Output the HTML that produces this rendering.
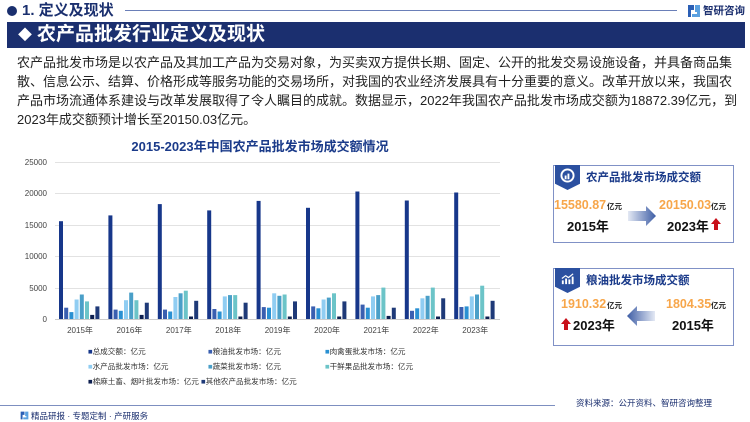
<!DOCTYPE html>
<html><head><meta charset="utf-8"><style>
*{margin:0;padding:0;box-sizing:border-box}
body{width:750px;height:422px;background:#fff;font-family:"Liberation Sans","Noto Sans CJK SC",sans-serif;position:relative;overflow:hidden;color:#222}
.abs{position:absolute}
.hdr{left:22px;top:2px;font-size:15px;font-weight:bold;color:#1a2f6e;line-height:18px}
.dot{left:7px;top:6px;width:10px;height:10px;border-radius:50%;background:#1a2f6e}
.hline{left:125px;top:10px;width:552px;height:1px;background:#6a7fb8}
.bar{left:7px;top:22px;width:738px;height:26px;background:#1b2f6f;color:#fff;font-size:19px;font-weight:bold;line-height:26px;padding-left:30px}
.para{left:17px;top:53px;width:726px;font-size:13px;line-height:19px;color:#222}
.ct{left:0;top:136px;width:520px;text-align:center;font-size:13px;font-weight:bold;color:#1b3b8a}
.panel{border:1.5px solid #8091c6;width:181px;height:78px;left:553px;background:#fff}
.badge{left:555px;width:25px;height:25px;background:#2b50a0;clip-path:polygon(0 0,100% 0,100% 75%,50% 100%,0 75%)}
.pt{font-size:11.5px;font-weight:bold;color:#1b3b8a}
.num{font-size:12.5px;font-weight:bold;color:#f7a64a}
.unit{font-size:7.5px;font-weight:bold;color:#222}
.yr{font-size:13px;font-weight:bold;color:#111}
.leg{font-size:7.6px;color:#333}
</style></head><body>
<div class="abs dot"></div>
<div class="abs hdr">1. 定义及现状</div>
<div class="abs hline"></div>
<svg class="abs" style="left:687px;top:4px" width="14" height="14" viewBox="0 0 14 14"><path d="M1 1h6v5H4v7H1z" fill="#2b5fb5"/><path d="M8 1h5v12H5v-3h5V8H8z" fill="#5aa0e0"/></svg>
<div class="abs" style="left:703px;top:3px;font-size:10.5px;font-weight:bold;color:#1b2f6f">智研咨询</div>
<div class="abs bar"><span style="position:absolute;left:11px;top:0;font-size:14px">◆</span>农产品批发行业定义及现状</div>
<div class="abs para">农产品批发市场是以农产品及其加工产品为交易对象，为买卖双方提供长期、固定、公开的批发交易设施设备，并具备商品集散、信息公示、结算、价格形成等服务功能的交易场所，对我国的农业经济发展具有十分重要的意义。改革开放以来，我国农产品市场流通体系建设与改革发展取得了令人瞩目的成就。数据显示，2022年我国农产品批发市场成交额为18872.39亿元，到2023年成交额预计增长至20150.03亿元。</div>
<div class="abs ct">2015-2023年中国农产品批发市场成交额情况</div>
<svg class="abs" style="left:0;top:0" width="540" height="340">
<g stroke="#e2e2e2" stroke-width="1">
<line x1="55" x2="500" y1="162.5" y2="162.5"/><line x1="55" x2="500" y1="193.5" y2="193.5"/><line x1="55" x2="500" y1="225.5" y2="225.5"/><line x1="55" x2="500" y1="256.5" y2="256.5"/><line x1="55" x2="500" y1="288.5" y2="288.5"/></g>
<line x1="55" x2="500" y1="319.5" y2="319.5" stroke="#ccc"/>
<g font-size="8" fill="#444" text-anchor="end">
<text x="47" y="165">25000</text><text x="47" y="196">20000</text><text x="47" y="228">15000</text><text x="47" y="259">10000</text><text x="47" y="291">5000</text><text x="47" y="322">0</text></g>
<g font-size="8" fill="#444" text-anchor="middle">
<text x="80" y="333">2015年</text><text x="129.4" y="333">2016年</text><text x="178.8" y="333">2017年</text><text x="228.2" y="333">2018年</text><text x="277.6" y="333">2019年</text><text x="327" y="333">2020年</text><text x="376.4" y="333">2021年</text><text x="425.8" y="333">2022年</text><text x="475.2" y="333">2023年</text></g>
<g transform="translate(59,319) scale(1,-1)"><rect x="0" width="4" height="97.8" fill="#17378a"/><rect x="5.2" width="4" height="11.3" fill="#3a5fb0"/><rect x="10.4" width="4" height="6.9" fill="#2a90d2"/><rect x="15.6" width="4" height="19.5" fill="#90cdf2"/><rect x="20.8" width="4" height="24.5" fill="#4a9fc8"/><rect x="26" width="4" height="17.6" fill="#6cc4c8"/><rect x="31.2" width="4" height="4.1" fill="#0d1f4f"/><rect x="36.4" width="4" height="12.6" fill="#1f3a78"/></g>
<g transform="translate(108.4,319) scale(1,-1)"><rect x="0" width="4" height="103.6" fill="#17378a"/><rect x="5.2" width="4" height="9.4" fill="#3a5fb0"/><rect x="10.4" width="4" height="8.2" fill="#2a90d2"/><rect x="15.6" width="4" height="18.8" fill="#90cdf2"/><rect x="20.8" width="4" height="26.4" fill="#4a9fc8"/><rect x="26" width="4" height="18.8" fill="#6cc4c8"/><rect x="31.2" width="4" height="4.1" fill="#0d1f4f"/><rect x="36.4" width="4" height="16.3" fill="#1f3a78"/></g>
<g transform="translate(157.8,319) scale(1,-1)"><rect x="0" width="4" height="114.9" fill="#17378a"/><rect x="5.2" width="4" height="9.4" fill="#3a5fb0"/><rect x="10.4" width="4" height="7.5" fill="#2a90d2"/><rect x="15.6" width="4" height="22" fill="#90cdf2"/><rect x="20.8" width="4" height="25.7" fill="#4a9fc8"/><rect x="26" width="4" height="28.3" fill="#6cc4c8"/><rect x="31.2" width="4" height="2.5" fill="#0d1f4f"/><rect x="36.4" width="4" height="18.2" fill="#1f3a78"/></g>
<g transform="translate(207.2,319) scale(1,-1)"><rect x="0" width="4" height="108.6" fill="#17378a"/><rect x="5.2" width="4" height="10" fill="#3a5fb0"/><rect x="10.4" width="4" height="7.5" fill="#2a90d2"/><rect x="15.6" width="4" height="22.6" fill="#90cdf2"/><rect x="20.8" width="4" height="23.9" fill="#4a9fc8"/><rect x="26" width="4" height="23.9" fill="#6cc4c8"/><rect x="31.2" width="4" height="2.5" fill="#0d1f4f"/><rect x="36.4" width="4" height="16.3" fill="#1f3a78"/></g>
<g transform="translate(256.6,319) scale(1,-1)"><rect x="0" width="4" height="118.1" fill="#17378a"/><rect x="5.2" width="4" height="11.9" fill="#3a5fb0"/><rect x="10.4" width="4" height="11.3" fill="#2a90d2"/><rect x="15.6" width="4" height="25.7" fill="#90cdf2"/><rect x="20.8" width="4" height="23.2" fill="#4a9fc8"/><rect x="26" width="4" height="24.5" fill="#6cc4c8"/><rect x="31.2" width="4" height="2.5" fill="#0d1f4f"/><rect x="36.4" width="4" height="17.6" fill="#1f3a78"/></g>
<g transform="translate(306,319) scale(1,-1)"><rect x="0" width="4" height="111.2" fill="#17378a"/><rect x="5.2" width="4" height="12.6" fill="#3a5fb0"/><rect x="10.4" width="4" height="10.7" fill="#2a90d2"/><rect x="15.6" width="4" height="19.5" fill="#90cdf2"/><rect x="20.8" width="4" height="21.4" fill="#4a9fc8"/><rect x="26" width="4" height="25.7" fill="#6cc4c8"/><rect x="31.2" width="4" height="2.5" fill="#0d1f4f"/><rect x="36.4" width="4" height="17.6" fill="#1f3a78"/></g>
<g transform="translate(355.4,319) scale(1,-1)"><rect x="0" width="4" height="127.5" fill="#17378a"/><rect x="5.2" width="4" height="14.4" fill="#3a5fb0"/><rect x="10.4" width="4" height="11.3" fill="#2a90d2"/><rect x="15.6" width="4" height="22.6" fill="#90cdf2"/><rect x="20.8" width="4" height="23.9" fill="#4a9fc8"/><rect x="26" width="4" height="31.4" fill="#6cc4c8"/><rect x="31.2" width="4" height="3.1" fill="#0d1f4f"/><rect x="36.4" width="4" height="11.3" fill="#1f3a78"/></g>
<g transform="translate(404.8,319) scale(1,-1)"><rect x="0" width="4" height="118.5" fill="#17378a"/><rect x="5.2" width="4" height="8.2" fill="#3a5fb0"/><rect x="10.4" width="4" height="10.7" fill="#2a90d2"/><rect x="15.6" width="4" height="20.7" fill="#90cdf2"/><rect x="20.8" width="4" height="23.2" fill="#4a9fc8"/><rect x="26" width="4" height="31.4" fill="#6cc4c8"/><rect x="31.2" width="4" height="2.5" fill="#0d1f4f"/><rect x="36.4" width="4" height="20.7" fill="#1f3a78"/></g>
<g transform="translate(454.2,319) scale(1,-1)"><rect x="0" width="4" height="126.5" fill="#17378a"/><rect x="5.2" width="4" height="12" fill="#3a5fb0"/><rect x="10.4" width="4" height="12.6" fill="#2a90d2"/><rect x="15.6" width="4" height="22.6" fill="#90cdf2"/><rect x="20.8" width="4" height="24.5" fill="#4a9fc8"/><rect x="26" width="4" height="33.3" fill="#6cc4c8"/><rect x="31.2" width="4" height="2.5" fill="#0d1f4f"/><rect x="36.4" width="4" height="18.2" fill="#1f3a78"/></g>
</svg>
<div class="abs leg" style="left:88px;top:346px"><span style="color:#17378a">■</span>总成交额：亿元</div>
<div class="abs leg" style="left:208px;top:346px"><span style="color:#3a5fb0">■</span>粮油批发市场：亿元</div>
<div class="abs leg" style="left:325px;top:346px"><span style="color:#2a90d2">■</span>肉禽蛋批发市场：亿元</div>
<div class="abs leg" style="left:88px;top:361px"><span style="color:#90cdf2">■</span>水产品批发市场：亿元</div>
<div class="abs leg" style="left:208px;top:361px"><span style="color:#4a9fc8">■</span>蔬菜批发市场：亿元</div>
<div class="abs leg" style="left:325px;top:361px"><span style="color:#6cc4c8">■</span>干鲜果品批发市场：亿元</div>
<div class="abs leg" style="left:88px;top:376px"><span style="color:#0d1f4f">■</span>棉麻土畜、烟叶批发市场：亿元 <span style="color:#1f3a78">■</span>其他农产品批发市场：亿元</div>
<div class="abs panel" style="top:165px"></div>
<div class="abs badge" style="top:165px"></div>
<svg class="abs" style="left:560px;top:168px" width="15" height="15" viewBox="0 0 16 16"><circle cx="8" cy="8" r="6.5" fill="none" stroke="#fff" stroke-width="2"/><rect x="5" y="8" width="2" height="4" fill="#fff"/><rect x="8" y="6" width="2" height="6" fill="#fff"/></svg>
<div class="abs pt" style="left:586px;top:169px">农产品批发市场成交额</div>
<div class="abs num" style="left:554px;top:198px">15580.87</div>
<div class="abs unit" style="left:607px;top:201px">亿元</div>
<div class="abs yr" style="left:567px;top:216px">2015年</div>
<svg class="abs" style="left:628px;top:206px" width="30" height="20"><defs><linearGradient id="g1"><stop offset="0" stop-color="#e4e9f4"/><stop offset="1" stop-color="#3d5da5"/></linearGradient></defs><path d="M0 5h18V0l10 10-10 10v-5H0z" fill="url(#g1)"/></svg>
<div class="abs num" style="left:659px;top:198px">20150.03</div>
<div class="abs unit" style="left:711px;top:201px">亿元</div>
<div class="abs yr" style="left:667px;top:216px">2023年</div>
<svg class="abs" style="left:711px;top:218px" width="10" height="12"><path d="M5 0l5 6H7v6H3V6H0z" fill="#c8101a"/></svg>
<div class="abs panel" style="top:268px"></div>
<div class="abs badge" style="top:268px"></div>
<svg class="abs" style="left:560px;top:271px" width="15" height="15" viewBox="0 0 16 16"><rect x="2" y="10" width="2" height="4" fill="#fff"/><rect x="5.5" y="8" width="2" height="6" fill="#fff"/><rect x="9" y="9" width="2" height="5" fill="#fff"/><rect x="12.5" y="6" width="2" height="8" fill="#fff"/><path d="M2 8l4-3 3 2 5-4" stroke="#fff" fill="none" stroke-width="1.3"/></svg>
<div class="abs pt" style="left:586px;top:272px">粮油批发市场成交额</div>
<div class="abs num" style="left:561px;top:297px">1910.32</div>
<div class="abs unit" style="left:607px;top:300px">亿元</div>
<svg class="abs" style="left:561px;top:318px" width="10" height="12"><path d="M5 0l5 6H7v6H3V6H0z" fill="#c8101a"/></svg>
<div class="abs yr" style="left:573px;top:315px">2023年</div>
<svg class="abs" style="left:625px;top:306px" width="30" height="20"><defs><linearGradient id="g2"><stop offset="0" stop-color="#3d5da5"/><stop offset="1" stop-color="#e4e9f4"/></linearGradient></defs><path d="M30 5H12V0L2 10l10 10v-5h18z" fill="url(#g2)"/></svg>
<div class="abs num" style="left:666px;top:297px">1804.35</div>
<div class="abs unit" style="left:711px;top:300px">亿元</div>
<div class="abs yr" style="left:672px;top:315px">2015年</div>
<div class="abs" style="left:0;top:405px;width:555px;height:1px;background:#7d8fc0"></div>
<div class="abs" style="left:576px;top:397px;font-size:8.5px;color:#1b2f6f">资料来源：公开资料、智研咨询整理</div>
<svg class="abs" style="left:20px;top:411px" width="9" height="9" viewBox="0 0 14 14"><path d="M1 1h6v5H4v7H1z" fill="#2b5fb5"/><path d="M8 1h5v12H5v-3h5V8H8z" fill="#5aa0e0"/></svg>
<div class="abs" style="left:31px;top:410px;font-size:8.5px;color:#1b2f6f">精品研报 · 专题定制 · 产研服务</div>
</body></html>
